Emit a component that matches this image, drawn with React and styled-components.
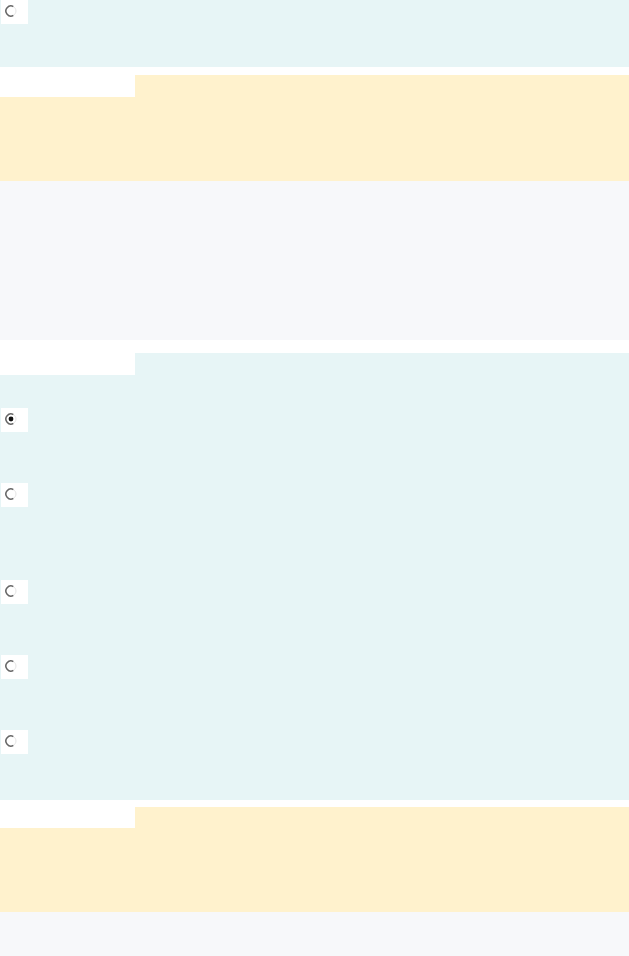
import React from 'react';
import styled, { createGlobalStyle } from 'styled-components';

const GlobalStyle = createGlobalStyle`
  body {
    margin: 0;
    background: #ffffff;
    font-family: 'Liberation Sans', Arial, sans-serif;
  }
`;

const colors = {
  cyan: '#e7f5f6',
  yellow: '#fff2cd',
  gray: '#f7f8fa',
};

const Page = styled.div`
  width: 629px;
  display: flex;
  flex-direction: column;
`;

const Block = styled.section`
  background: ${(p) => colors[p.tone]};
  height: ${(p) => p.h}px;
  margin-top: ${(p) => p.gap || 0}px;
  flex-shrink: 0;
`;

const Panel = styled.section`
  margin-top: ${(p) => p.gap || 0}px;
  display: flex;
  flex-direction: column;
`;

const TabRow = styled.div`
  display: flex;
  height: ${(p) => p.h}px;
`;

const TabSpacer = styled.div`
  width: 135px;
  background: #ffffff;
`;

const Tab = styled.div`
  flex: 1;
  background: ${(p) => colors[p.tone]};
`;

const PanelBody = styled.div`
  background: ${(p) => colors[p.tone]};
  height: ${(p) => p.h}px;
  display: flex;
  flex-direction: column;
  padding-top: ${(p) => p.pad || 0}px;
  box-sizing: border-box;
  overflow: hidden;
`;

const OptionRow = styled.label`
  display: flex;
  align-items: flex-start;
  flex-shrink: 0;
  height: ${(p) => (p.tall ? 97 : 75)}px;
  padding-left: 1px;
`;

const RadioBox = styled.span`
  display: block;
  width: 27px;
  height: 24px;
  background: #ffffff;
`;

const Radio = ({ checked }) => (
  <RadioBox>
    <svg width="27" height="24" viewBox="0 0 27 24">
      <path
        d="M12.5 6.7 A5 5 0 1 0 12.5 15.3"
        fill="none"
        stroke="#666"
        strokeWidth="1.5"
      />
      <path
        d="M12.5 15.3 A5 5 0 0 0 12.5 6.7"
        fill="none"
        stroke="#e4e4e4"
        strokeWidth="1"
      />
      {checked && <circle cx="10" cy="11" r="2.4" fill="#111" />}
    </svg>
  </RadioBox>
);

const TopBlock = styled(Block)`
  padding-left: 1px;
`;

const options = [
  { id: 1, checked: true },
  { id: 2, tall: true },
  { id: 3 },
  { id: 4 },
  { id: 5 },
];

const App = () => (
  <>
    <GlobalStyle />
    <Page>
      <TopBlock tone="cyan" h={67}>
        <Radio />
      </TopBlock>

      <Panel gap={8}>
        <TabRow h={22}>
          <TabSpacer />
          <Tab tone="yellow" />
        </TabRow>
        <PanelBody tone="yellow" h={84} />
      </Panel>

      <Block tone="gray" h={159} />

      <Panel gap={13}>
        <TabRow h={22}>
          <TabSpacer />
          <Tab tone="cyan" />
        </TabRow>
        <PanelBody tone="cyan" h={425} pad={33}>
          {options.map((o) => (
            <OptionRow key={o.id} tall={o.tall}>
              <Radio checked={o.checked} />
            </OptionRow>
          ))}
        </PanelBody>
      </Panel>

      <Panel gap={7}>
        <TabRow h={21}>
          <TabSpacer />
          <Tab tone="yellow" />
        </TabRow>
        <PanelBody tone="yellow" h={84} />
      </Panel>

      <Block tone="gray" h={44} />
    </Page>
  </>
);

export default App;
